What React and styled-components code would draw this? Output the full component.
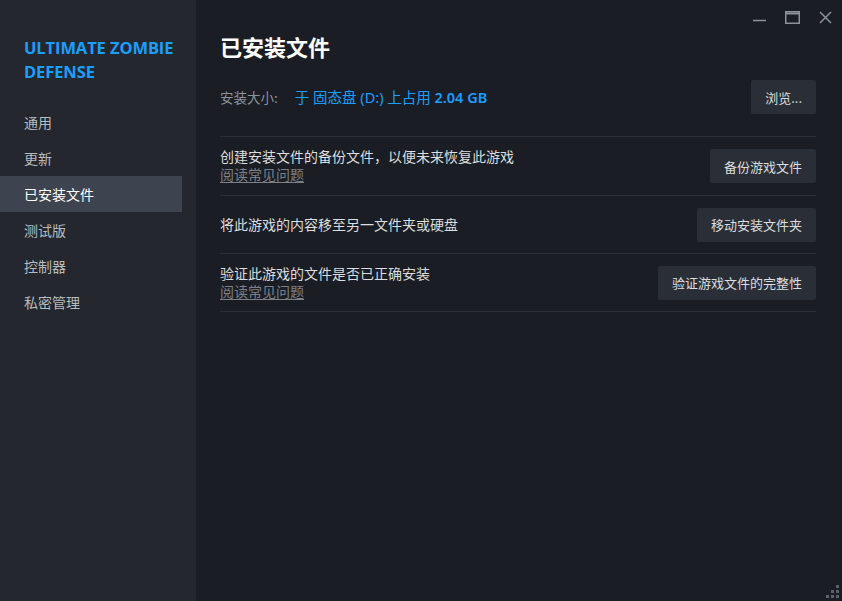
import React from "react";
import styled, { createGlobalStyle } from "styled-components";

const Global = createGlobalStyle`
  html, body { margin: 0; padding: 0; background: #1a1d24; }
  body { font-family: "Noto Sans", "Noto Sans CJK SC", sans-serif; }
  * { box-sizing: border-box; }
`;

const Frame = styled.div`
  display: flex;
  width: 842px;
  height: 601px;
  overflow: hidden;
  background: #1a1d24;
  position: relative;
`;

const Sidebar = styled.nav`
  width: 196px;
  flex: none;
  background: #24272e;
  padding-top: 36px;
  display: flex;
  flex-direction: column;
`;

const GameTitle = styled.div`
  font-family: "Open Sans", "Noto Sans", sans-serif;
  font-weight: 700;
  font-size: 16.5px;
  line-height: 24px;
  color: #1a9fff;
  padding: 0 14px 0 24px;
  margin-bottom: 20px;
  letter-spacing: -0.1px;
`;

const NavItem = styled.div`
  width: 182px;
  height: 36px;
  display: flex;
  align-items: center;
  padding-left: 24px;
  font-family: "Noto Sans CJK SC", sans-serif;
  font-size: 14px;
  color: ${(p) => (p.$active ? "#ffffff" : "#b8bcbf")};
  background: ${(p) => (p.$active ? "#3d4450" : "transparent")};
`;

const Main = styled.main`
  flex: 1;
  padding: 28px 26px 0 24px;
  display: flex;
  flex-direction: column;
`;

const WindowControls = styled.div`
  position: absolute;
  top: 6px;
  right: 0;
  display: flex;
`;

const CtrlBtn = styled.div`
  width: 33px;
  height: 22px;
  display: flex;
  align-items: center;
  justify-content: center;
  color: #8b929a;
`;

const Title = styled.h1`
  margin: 0;
  font-family: "Noto Sans CJK SC", sans-serif;
  font-weight: 700;
  font-size: 22px;
  line-height: 36px;
  color: #ffffff;
`;

const SizeRow = styled.div`
  display: flex;
  align-items: center;
  justify-content: space-between;
  margin-top: 16px;
  height: 34px;
  margin-bottom: 22px;
`;

const SizeLabel = styled.span`
  font-family: "Noto Sans CJK SC", sans-serif;
  font-size: 13.5px;
  color: #8b929a;
`;

const SizeValue = styled.span`
  font-family: "Noto Sans", "Noto Sans CJK SC", sans-serif;
  font-size: 14.5px;
  color: #1a9fff;
  margin-left: 17px;
  & b { font-weight: 600; }
`;

const Button = styled.div`
  height: 34px;
  padding: 0 14px;
  display: flex;
  align-items: center;
  background: #2a2e37;
  border-radius: 2px;
  color: #dcdedf;
  font-family: "Noto Sans CJK SC", sans-serif;
  font-size: 13px;
  white-space: nowrap;
`;

const Row = styled.div`
  display: flex;
  align-items: center;
  justify-content: space-between;
  height: 58px;
  border-top: 1px solid #2c3038;
  &:first-child { height: 59px; }
  &:last-child { height: 59px; border-bottom: 1px solid #2c3038; }
`;

const RowText = styled.div`
  display: flex;
  flex-direction: column;
  margin-top: -2px;
  font-family: "Noto Sans CJK SC", sans-serif;
  font-size: 14px;
  line-height: 18px;
  color: #dcdedf;
`;

const Link = styled.span`
  color: #7b8088;
  text-decoration: underline;
  text-underline-offset: 2px;
`;

const Grip = styled.div`
  position: absolute;
  right: 3px;
  bottom: 3px;
  display: grid;
  grid-template-columns: repeat(3, 3px);
  grid-template-rows: repeat(3, 3px);
  gap: 2px;
`;

const Dot = styled.span`
  width: 3px;
  height: 3px;
  background: ${(p) => (p.$on ? "#5c6068" : "transparent")};
`;

const navItems = ["通用", "更新", "已安装文件", "测试版", "控制器", "私密管理"];

const rows = [
  { text: "创建安装文件的备份文件，以便未来恢复此游戏", link: true, btn: "备份游戏文件" },
  { text: "将此游戏的内容移至另一文件夹或硬盘", link: false, btn: "移动安装文件夹" },
  { text: "验证此游戏的文件是否已正确安装", link: true, btn: "验证游戏文件的完整性" },
];

const gripPattern = [0, 0, 1, 0, 1, 1, 1, 1, 1];

export default function App() {
  return (
    <>
      <Global />
      <Frame>
        <Sidebar>
          <GameTitle>ULTIMATE ZOMBIE DEFENSE</GameTitle>
          {navItems.map((n) => (
            <NavItem key={n} $active={n === "已安装文件"}>{n}</NavItem>
          ))}
        </Sidebar>
        <Main>
          <Title>已安装文件</Title>
          <SizeRow>
            <div>
              <SizeLabel>安装大小:</SizeLabel>
              <SizeValue>于 固态盘 (D:) 上占用 <b>2.04 GB</b></SizeValue>
            </div>
            <Button>浏览...</Button>
          </SizeRow>
          <div>
            {rows.map((r) => (
              <Row key={r.btn}>
                <RowText>
                  <span>{r.text}</span>
                  {r.link && <Link>阅读常见问题</Link>}
                </RowText>
                <Button>{r.btn}</Button>
              </Row>
            ))}
          </div>
        </Main>
        <WindowControls>
          <CtrlBtn>
            <svg width="15" height="14" viewBox="0 0 15 14"><path d="M1 10.5h13" stroke="currentColor" strokeWidth="1.5" /></svg>
          </CtrlBtn>
          <CtrlBtn>
            <svg width="15" height="13" viewBox="0 0 15 13"><rect x="0.75" y="0.75" width="13.5" height="11.5" fill="none" stroke="currentColor" strokeWidth="1.5" /><path d="M0.75 2.5h13.5" stroke="currentColor" strokeWidth="2" /></svg>
          </CtrlBtn>
          <CtrlBtn>
            <svg width="13" height="13" viewBox="0 0 13 13"><path d="M1 1l11 11M12 1L1 12" stroke="currentColor" strokeWidth="1.5" /></svg>
          </CtrlBtn>
        </WindowControls>
        <Grip>
          {gripPattern.map((on, i) => <Dot key={i} $on={!!on} />)}
        </Grip>
      </Frame>
    </>
  );
}
